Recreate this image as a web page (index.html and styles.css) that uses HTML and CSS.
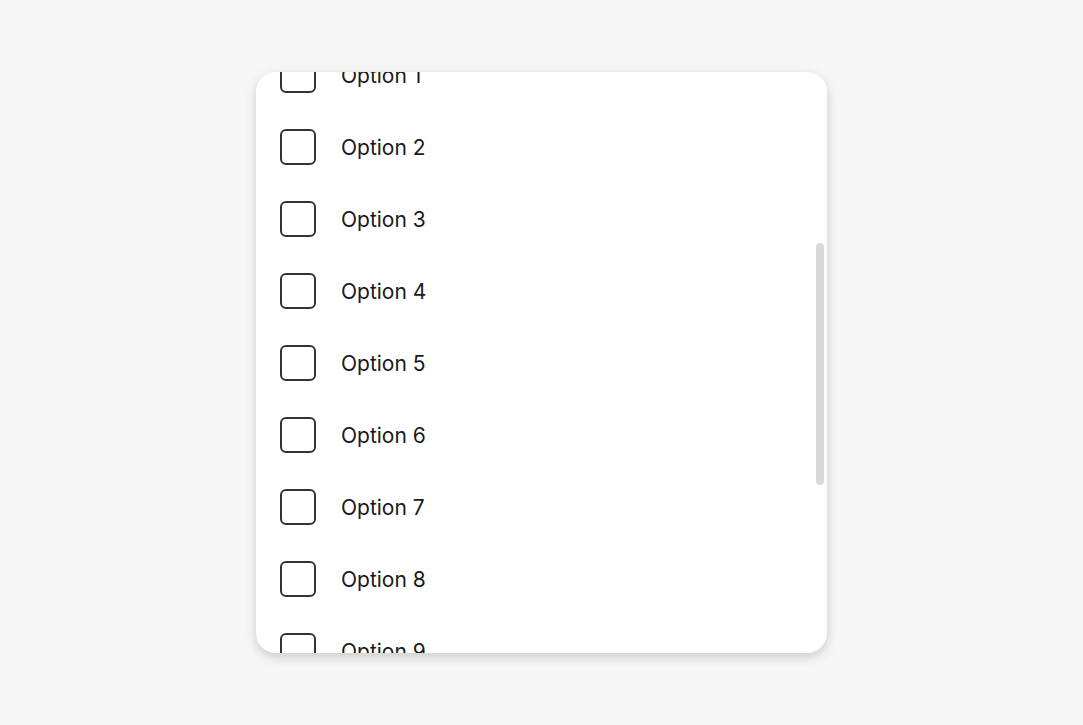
FILE: index.html
```html
<!DOCTYPE html>
<html lang="en">
<head>
    <meta charset="UTF-8">
    <meta name="viewport" content="width=device-width, initial-scale=1.0">
    <title>Options</title>
    <link rel="stylesheet" href="styles.css">
</head>
<body>
    <div class="card">
        <ul class="option-list">
            <li class="option"><span class="box"></span><span class="label">Option 1</span></li>
            <li class="option"><span class="box"></span><span class="label">Option 2</span></li>
            <li class="option"><span class="box"></span><span class="label">Option 3</span></li>
            <li class="option"><span class="box"></span><span class="label">Option 4</span></li>
            <li class="option"><span class="box"></span><span class="label">Option 5</span></li>
            <li class="option"><span class="box"></span><span class="label">Option 6</span></li>
            <li class="option"><span class="box"></span><span class="label">Option 7</span></li>
            <li class="option"><span class="box"></span><span class="label">Option 8</span></li>
            <li class="option"><span class="box"></span><span class="label">Option 9</span></li>
            <li class="option"><span class="box"></span><span class="label">Option 10</span></li>
        </ul>
        <div class="scroll-thumb"></div>
    </div>
</body>
</html>
```

FILE: styles.css
```css
body {
    display: flex;
    align-items: center;
    justify-content: center;
    min-height: 100vh;
    margin: 0;
    font-family: Inter, "Noto Sans", sans-serif;
    background-color: #f7f7f7;
}

.card {
    position: relative;
    width: 571px;
    height: 581px;
    background-color: #fff;
    border-radius: 20px;
    box-shadow: 0 4px 12px rgba(0,0,0,0.18);
    overflow: hidden;
}

.option-list {
    list-style: none;
    margin: -33px 0 0 0;
    padding: 0;
}

.option {
    display: flex;
    align-items: center;
    height: 72px;
    padding-left: 24px;
}

.box {
    box-sizing: border-box;
    width: 36px;
    height: 36px;
    border: 2px solid #333;
    border-radius: 6px;
    margin-right: 25px;
}

.label {
    font-size: 21px;
    color: #1a1a1a;
}

.scroll-thumb {
    position: absolute;
    top: 171px;
    right: 3px;
    width: 8px;
    height: 242px;
    border-radius: 4px;
    background-color: #d9d9d9;
}
```
